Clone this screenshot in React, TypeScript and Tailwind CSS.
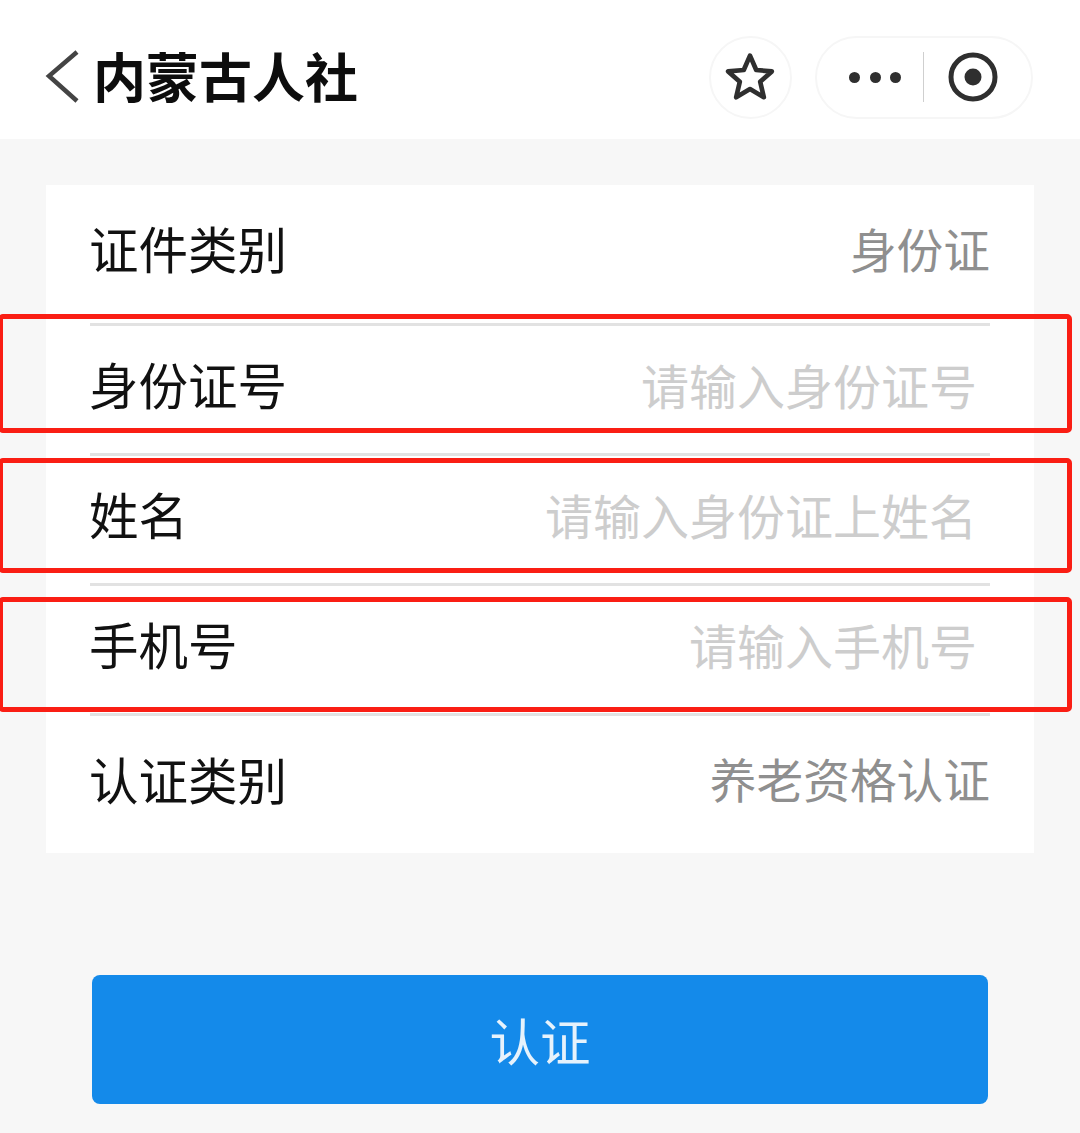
import React from "react";

function Row({ label, value, placeholder, first, last }: { label: string; value?: string; placeholder?: string; first?: boolean; last?: boolean }) {
  const box = first
    ? "flex h-[138px] items-center justify-between pb-[12px]"
    : last
      ? "flex h-[140px] items-center justify-between border-t-[3px] border-[#e2e2e2] pb-[12px]"
      : "flex h-[130px] items-center justify-between border-t-[3px] border-[#e2e2e2] pb-[12px]";
  return (
    <div className={box}>
      <span className="ml-[-1px] text-[49.5px] leading-none text-[#111111]">{label}</span>
      {value ? (
        <span className="text-[46.7px] leading-none text-[#8f8f8f]">{value}</span>
      ) : (
        <span className="mr-[13px] text-[48px] leading-none text-[#cdcdcd]">{placeholder}</span>
      )}
    </div>
  );
}

function Mark({ box }: { box: string }) {
  return <div className={`absolute left-[-2px] w-[1074px] rounded-[5px] border-[5px] border-[#fa1e14] ${box}`} />;
}

export default function App() {
  return (
    <div className="relative h-[1133px] w-[1080px] overflow-hidden bg-[#f7f7f7] font-['Noto_Sans_CJK_SC','Noto_Sans',sans-serif]">
      <header className="flex h-[139px] items-center justify-between bg-white pl-[44px] pr-[47px] pt-[16px]">
        <div className="flex items-center">
          <svg width="36" height="56" viewBox="0 0 36 56" fill="none" className="mt-[-1px]">
            <path d="M33 3 L5 27 L33 52" stroke="#444444" strokeWidth="4.5" />
          </svg>
          <h1 className="ml-[13px] mt-[-4px] text-[53px] font-bold leading-none text-[#0d0d0d]">内蒙古人社</h1>
        </div>
        <div className="mt-[-1px] flex items-center gap-[23px]">
          <div className="flex h-[83px] w-[83px] items-center justify-center rounded-full border-2 border-[#f6f6f6]">
            <svg width="52" height="52" viewBox="0 0 50 50" fill="none" className="ml-[-1px]">
              <path d="M25 4.5 L31 18.3 L46 19.6 L34.8 29.6 L38.3 44.5 L25 36.6 L11.7 44.5 L15.2 29.6 L4 19.6 L19 18.3 Z" stroke="#2f2f2f" strokeWidth="4.5" strokeLinejoin="round" />
            </svg>
          </div>
          <div className="flex h-[83px] w-[218px] items-center rounded-full border-2 border-[#f6f6f6] pl-[32px]">
            <div className="flex w-[52px] items-center justify-between">
              <span className="h-[11px] w-[11px] rounded-full bg-[#2f2f2f]" />
              <span className="h-[11px] w-[11px] rounded-full bg-[#2f2f2f]" />
              <span className="h-[11px] w-[11px] rounded-full bg-[#2f2f2f]" />
            </div>
            <div className="ml-[22px] h-[50px] w-[1px] bg-[#cfcfcf]" />
            <svg width="50" height="50" viewBox="0 0 50 50" fill="none" className="ml-[24px]">
              <circle cx="25" cy="25" r="22" stroke="#2f2f2f" strokeWidth="5" />
              <circle cx="25" cy="25" r="8.5" fill="#2f2f2f" />
            </svg>
          </div>
        </div>
      </header>

      <main className="px-[46px] pt-[46px]">
        <section className="bg-white px-[44px]">
          <Row first label="证件类别" value="身份证" />
          <Row label="身份证号" placeholder="请输入身份证号" />
          <Row label="姓名" placeholder="请输入身份证上姓名" />
          <Row label="手机号" placeholder="请输入手机号" />
          <Row last label="认证类别" value="养老资格认证" />
        </section>
        <button className="mx-[46px] mt-[122px] flex h-[129px] w-[896px] items-center justify-center rounded-[8px] bg-[#148aea] text-[50.5px] leading-none text-[#e6f2fc]">
          认证
        </button>
      </main>

      <Mark box="top-[314px] h-[119px]" />
      <Mark box="top-[458px] h-[115px]" />
      <Mark box="top-[597px] h-[115px]" />
    </div>
  );
}
